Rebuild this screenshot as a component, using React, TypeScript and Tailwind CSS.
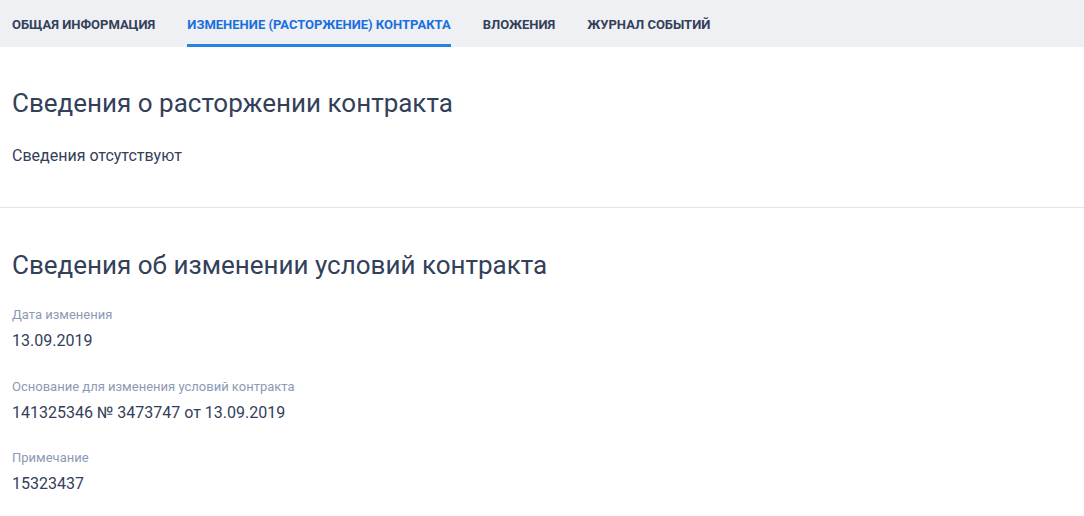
import React from 'react'

const tabs = [
  'Общая информация',
  'Изменение (расторжение) контракта',
  'Вложения',
  'Журнал событий',
]

const fields = [
  { label: 'Дата изменения', value: '13.09.2019' },
  {
    label: 'Основание для изменения условий контракта',
    value: '141325346 № 3473747 от 13.09.2019',
  },
  { label: 'Примечание', value: '15323437' },
]

export default function App() {
  const active = 1

  return (
    <div className="min-h-[516px] bg-white font-['Roboto',sans-serif] text-[#334059]">
      <div className="flex h-[47px] items-stretch gap-8 bg-[#eff0f3] px-3">
        {tabs.map((tab, i) => (
          <div
            key={tab}
            className={
              i === active
                ? 'flex items-center border-b-[3px] border-[#2a82e0] pt-[6px] text-[13px] font-bold uppercase text-[#1a6fe0]'
                : 'flex items-center border-b-[3px] border-transparent pt-[6px] text-[13px] font-bold uppercase text-[#334059]'
            }
          >
            {tab}
          </div>
        ))}
      </div>

      <section className="border-b border-[#e3e3ec] px-3 pt-[40px] pb-[39px]">
        <h2 className="text-[26px] leading-[32px] font-normal">
          Сведения о расторжении контракта
        </h2>
        <p className="mt-[25px] text-[16px] leading-[24px]">Сведения отсутствуют</p>
      </section>

      <section className="px-3 pt-[41px]">
        <h2 className="text-[26px] leading-[32px] font-normal">
          Сведения об изменении условий контракта
        </h2>
        <div className="mt-[25px] flex flex-col gap-[24.5px]">
          {fields.map((f) => (
            <div key={f.label}>
              <div className="text-[13px] leading-[18px] text-[#8c9ab4]">{f.label}</div>
              <div className="mt-[5px] text-[16px] leading-[24px]">{f.value}</div>
            </div>
          ))}
        </div>
      </section>
    </div>
  )
}
